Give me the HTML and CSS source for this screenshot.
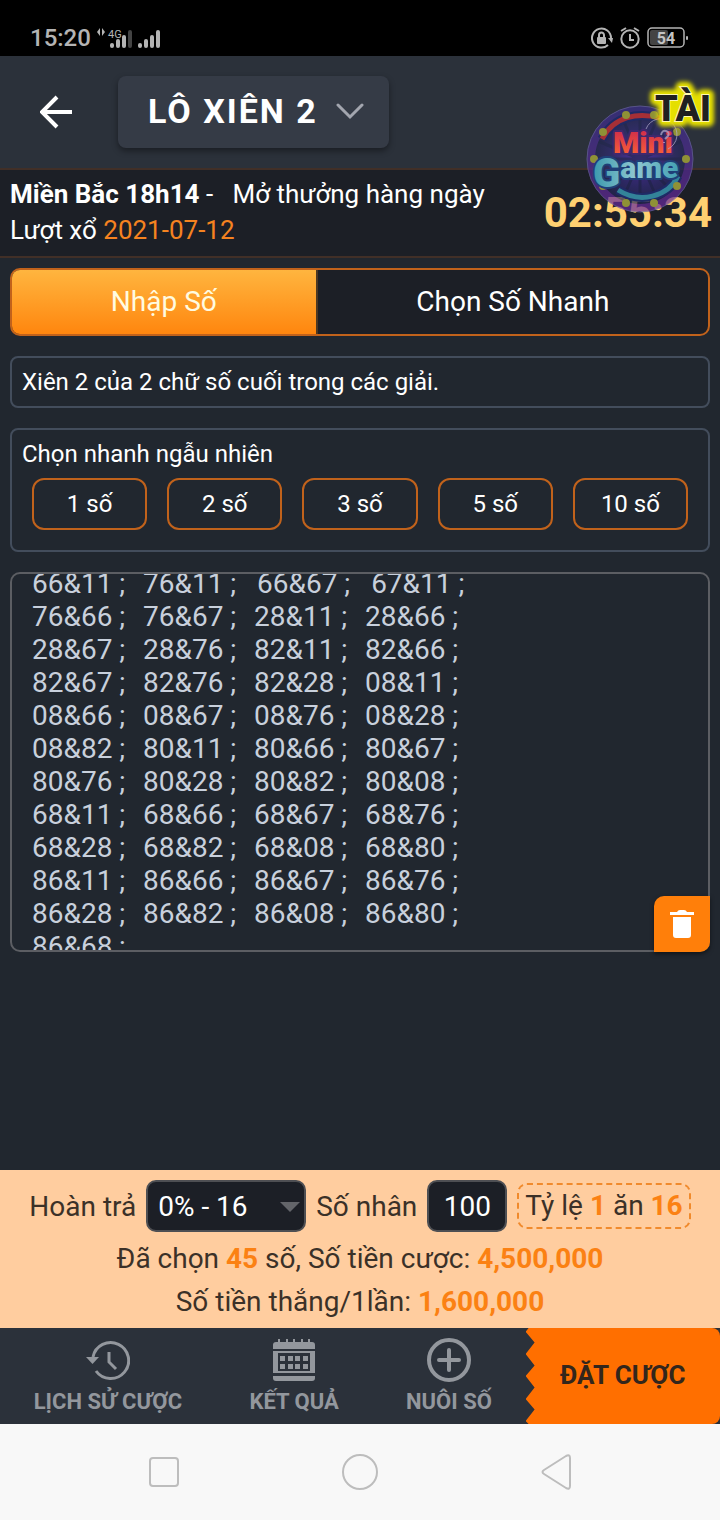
FILE: index.html
```html
<!DOCTYPE html>
<html lang="vi">
<head>
    <meta charset="UTF-8">
    <meta name="viewport" content="width=device-width, initial-scale=1.0">
    <title>Lô Xiên 2</title>
    <link rel="stylesheet" href="styles.css">
</head>
<body>
    <div class="status-bar">
        <div class="status-left">
            <span class="clock">15:20</span>
            <svg width="66" height="24" viewBox="0 0 66 24" fill="#b4b4b4">
                <path d="M0 6l3-4v8zM8 6L5 2v8z"/>
                <text x="11" y="12" font-size="11">4G</text>
                <rect x="13" y="17" width="4" height="5" rx="2"/>
                <rect x="19" y="13" width="4" height="9" rx="2"/>
                <rect x="25" y="9" width="4" height="13" rx="2"/>
                <rect x="31" y="4" width="4" height="18" rx="2" fill="#444"/>
                <rect x="41" y="17" width="4" height="5" rx="2"/>
                <rect x="47" y="13" width="4" height="9" rx="2"/>
                <rect x="53" y="9" width="4" height="13" rx="2"/>
                <rect x="59" y="4" width="4" height="18" rx="2"/>
            </svg>
        </div>
        <div class="status-right">
            <svg width="22" height="24" viewBox="0 0 22 24" fill="none" stroke="#b4b4b4" stroke-width="2">
                <path d="M17 19A9.500 9.500 0 1 1 20 12"/>
                <path d="M17 12h5l-1 5z" fill="#b4b4b4" stroke="none"/>
                <rect x="6" y="11" width="9" height="7" rx="1" fill="#b4b4b4" stroke="none"/>
                <path d="M8 11V9a2.500 2.500 0 0 1 5 0v2"/>
            </svg>
            <svg width="22" height="24" viewBox="0 0 22 24" fill="none" stroke="#b4b4b4" stroke-width="2">
                <circle cx="11" cy="13" r="8.700"/>
                <path d="M11 8v6h4M2 5l5-3M20 5l-5-3"/>
            </svg>
            <svg width="42" height="22" viewBox="0 0 42 22">
                <rect x="1" y="1" width="36" height="19" rx="4" fill="none" stroke="#b4b4b4" stroke-width="1.500"/>
                <rect x="3" y="3" width="18" height="15" rx="2" fill="#444"/>
                <rect x="39" y="9" width="2" height="4" rx="1" fill="#b4b4b4"/>
                <text x="19" y="17" font-size="16" font-weight="700" text-anchor="middle" fill="#c4c4c4">54</text>
            </svg>
        </div>
    </div>

    <header class="header">
        <a class="back" href="#" aria-label="Quay lại">
            <svg width="34" height="34" viewBox="0 0 34 34" fill="none" stroke="#fff" stroke-width="4">
                <path d="M32 17H3M17 2L2 17l15 15"/>
            </svg>
        </a>
        <button class="game-picker" type="button">
            LÔ XIÊN 2
            <svg width="28" height="18" viewBox="0 0 28 18" fill="none" stroke="#a3a6af" stroke-width="3" stroke-linecap="round">
                <path d="M2 3l12 12L26 3"/>
            </svg>
        </button>
    </header>

    <section class="draw-info">
        <div>
            <p><strong>Miền Bắc 18h14</strong>&nbsp;-&nbsp;&nbsp; Mở thưởng hàng ngày</p>
            <p>Lượt xổ <span class="draw-date">2021-07-12</span></p>
        </div>
        <div class="countdown">02:55:34</div>
    </section>

    <a class="mini-game" href="#" aria-label="Mini Game">
        <svg width="140" height="140" viewBox="0 0 140 140">
            <defs>
                <linearGradient id="ring" x1="0" y1="0" x2="0" y2="1">
                    <stop offset="0" stop-color="#3b2d8c"/>
                    <stop offset="1" stop-color="#682a9c"/>
                </linearGradient>
                <radialGradient id="disc">
                    <stop offset="0" stop-color="#5b31c9"/>
                    <stop offset="0.600" stop-color="#322b77"/>
                    <stop offset="1" stop-color="#222650"/>
                </radialGradient>
                <linearGradient id="fire" x1="0" y1="0" x2="0" y2="1">
                    <stop offset="0" stop-color="#c9234f"/>
                    <stop offset="1" stop-color="#ff6a32"/>
                </linearGradient>
                <linearGradient id="ice" x1="0" y1="0" x2="1" y2="0">
                    <stop offset="0" stop-color="#3b98ad"/>
                    <stop offset="0.500" stop-color="#8fc8d0"/>
                    <stop offset="1" stop-color="#43a0b4"/>
                </linearGradient>
                <filter id="glow" x="-30%" y="-50%" width="160%" height="200%">
                    <feGaussianBlur stdDeviation="2"/>
                </filter>
            </defs>
            <g opacity="0.700">
                <circle cx="60" cy="84" r="49" fill="url(#disc)"/>
                <g stroke="#1f2550" stroke-width="3" opacity="0.600">
                    <path d="M60 38v92M14 84h92M28 52l64 64M92 52l-64 64M42 42l36 84M78 42l-36 84M18 66l84 36M18 102l84-36"/>
                </g>
                <circle cx="60" cy="84" r="49" fill="none" stroke="url(#ring)" stroke-width="8"/>
                <circle cx="60" cy="84" r="53" fill="none" stroke="#6b62a8" stroke-width="1"/>
            </g>
            <g fill="none">
                <path d="M22 64C34 41 58 37 80 43" stroke="#1f2a66" stroke-width="9"/>
                <path d="M22 64C34 41 58 37 80 43" stroke="#a52f36" stroke-width="5"/>
                <path d="M38 115c22 14 50 7 60-14" stroke="#1f2a66" stroke-width="9"/>
                <path d="M38 115c22 14 50 7 60-14" stroke="#338399" stroke-width="5"/>
            </g>
            <g fill="#8f9136">
                <circle cx="46" cy="40" r="4"/><circle cx="74" cy="40" r="4"/>
                <circle cx="23" cy="57" r="4"/><circle cx="97" cy="57" r="4"/>
                <circle cx="14" cy="84" r="4"/><circle cx="106" cy="84" r="4"/>
                <circle cx="23" cy="111" r="4"/><circle cx="97" cy="111" r="4"/>
                <circle cx="46" cy="128" r="4"/><circle cx="74" cy="128" r="4"/>
            </g>
            <g class="logo-text" paint-order="stroke" stroke-width="4" stroke-linejoin="round">
                <text x="33" y="78" font-size="30" fill="url(#fire)" stroke="#41286d">Mini</text>
                <text x="13" y="112" font-size="40" fill="url(#ice)" stroke="#1f3f78">G<tspan y="103" font-size="30">ame</tspan></text>
            </g>
            <g fill="none" stroke="#b6aed0" opacity="0.700">
                <path d="M66 54a16 16 0 1 1 22 20"/>
                <path d="M81 60q1-5 5-4t2 5l-3 3M84 67v1" stroke-width="2"/>
            </g>
            <g class="logo-text" font-size="36" text-anchor="middle">
                <text x="103" y="46" fill="#e6e000" stroke="#e6e000" stroke-width="11" stroke-linejoin="round" filter="url(#glow)">TÀI</text>
                <text x="103" y="46" fill="#202020" stroke="#fff8b0" stroke-width="2" paint-order="stroke">TÀI</text>
            </g>
        </svg>
    </a>

    <main class="content">
        <div class="tabs">
            <button class="tab tab-active" type="button">Nhập Số</button>
            <button class="tab" type="button">Chọn Số Nhanh</button>
        </div>

        <p class="panel hint">Xiên 2 của 2 chữ số cuối trong các giải.</p>

        <div class="panel random">
            <p class="random-title">Chọn nhanh ngẫu nhiên</p>
            <div class="random-buttons">
                <button type="button">1 số</button>
                <button type="button">2 số</button>
                <button type="button">3 số</button>
                <button type="button">5 số</button>
                <button type="button">10 số</button>
            </div>
        </div>

        <div class="numbers">
            <textarea id="numbers" aria-label="Danh sách số">66&amp;11 ;&#9;76&amp;11 ;   66&amp;67 ;   67&amp;11 ;
76&amp;66 ;&#9;76&amp;67 ;&#9;28&amp;11 ;&#9;28&amp;66 ;
28&amp;67 ;&#9;28&amp;76 ;&#9;82&amp;11 ;&#9;82&amp;66 ;
82&amp;67 ;&#9;82&amp;76 ;&#9;82&amp;28 ;&#9;08&amp;11 ;
08&amp;66 ;&#9;08&amp;67 ;&#9;08&amp;76 ;&#9;08&amp;28 ;
08&amp;82 ;&#9;80&amp;11 ;&#9;80&amp;66 ;&#9;80&amp;67 ;
80&amp;76 ;&#9;80&amp;28 ;&#9;80&amp;82 ;&#9;80&amp;08 ;
68&amp;11 ;&#9;68&amp;66 ;&#9;68&amp;67 ;&#9;68&amp;76 ;
68&amp;28 ;&#9;68&amp;82 ;&#9;68&amp;08 ;&#9;68&amp;80 ;
86&amp;11 ;&#9;86&amp;66 ;&#9;86&amp;67 ;&#9;86&amp;76 ;
86&amp;28 ;&#9;86&amp;82 ;&#9;86&amp;08 ;&#9;86&amp;80 ;
86&amp;68 ;</textarea>
            <button class="clear" type="button" aria-label="Xóa">
                <svg width="24" height="28" viewBox="0 0 24 28" fill="#fff">
                    <path d="M0 2h7q1-2 3-2h4q2 0 3 2h7v3H0zM3 7h18v18a3 3 0 0 1-3 3H6a3 3 0 0 1-3-3z"/>
                </svg>
            </button>
        </div>
    </main>

    <section class="summary">
        <div class="bet-row">
            <label for="rebate">Hoàn trả</label>
            <span class="select-wrap">
                <select id="rebate">
                    <option>0% - 16</option>
                </select>
            </span>
            <label for="multiplier">Số nhân</label>
            <input id="multiplier" type="text" inputmode="numeric" value="100">
            <span class="odds">Tỷ lệ <b>1</b> ăn <b>16</b></span>
        </div>
        <p>Đã chọn <b>45</b> số, Số tiền cược: <b>4,500,000</b></p>
        <p>Số tiền thắng/1lần: <b>1,600,000</b></p>
    </section>

    <nav class="bottom-nav">
        <div class="nav-links">
            <a href="#">
                <svg width="44" height="44" viewBox="0 0 44 44" fill="none" stroke="#93979d" stroke-width="2">
                    <path d="M7 19A18 18 0 1 1 10 33" stroke-width="3"/>
                    <path d="M0 19h13l-6.500 7z" fill="#93979d" stroke="none"/>
                    <path d="M23 14v10l7 7" stroke-width="3"/>
                </svg>
                LỊCH SỬ CƯỢC
            </a>
            <a href="#">
                <svg width="44" height="44" viewBox="0 0 44 44" fill="#93979d">
                    <path d="M1 11V7a3 3 0 0 1 3-3h2V1h2v3h6V1h2v3h5V1h2v3h6V1h2v3h5V1h2v3h2a3 3 0 0 1 3 3v4z"/>
                    <path fill-rule="evenodd" d="M1 13h42v22H1zM6 15v18h32V15z"/>
                    <path d="M8 18h5v5H8zM16 18h5v5h-5zM23 18h5v5h-5zM31 18h5v5h-5zM8 26h5v5H8zM16 26h5v5h-5zM23 26h5v5h-5zM31 26h5v5h-5z"/>
                    <path d="M1 38h42v2a3 3 0 0 1-3 3H4a3 3 0 0 1-3-3z"/>
                </svg>
                KẾT QUẢ
            </a>
            <a href="#">
                <svg width="44" height="44" viewBox="0 0 44 44" fill="none" stroke="#93979d" stroke-width="4">
                    <circle cx="22" cy="22" r="20"/>
                    <path d="M22 12v20M12 22h20" stroke-linecap="round"/>
                </svg>
                NUÔI SỐ
            </a>
        </div>
        <button class="place-bet" type="button">ĐẶT CƯỢC</button>
    </nav>

    <div class="system-nav">
        <svg width="38" height="38" viewBox="0 0 38 38"><rect x="5" y="5" width="28" height="28" rx="3"/></svg>
        <svg width="38" height="38" viewBox="0 0 38 38"><circle cx="19" cy="19" r="17"/></svg>
        <svg width="38" height="38" viewBox="0 0 38 38"><path d="M7 17L29 3q4-2 4 2v28q0 4-4 2L7 21q-3-2 0-4z"/></svg>
    </div>

    <script>
        document.getElementById('numbers').scrollTop = 17;
    </script>
</body>
</html>
```

FILE: styles.css
```css
* {
    box-sizing: border-box;
}

body {
    margin: 0;
    min-height: 100vh;
    display: flex;
    flex-direction: column;
    position: relative;
    font-family: Roboto, "Noto Sans", sans-serif;
    font-size: 24px;
    color: #fff;
    background-color: #21272f;
}

p {
    margin: 0;
}

button, select, input, textarea {
    font: inherit;
    color: inherit;
    margin: 0;
}

a {
    color: inherit;
    text-decoration: none;
}

svg {
    display: block;
}

/* status bar */
.status-bar {
    display: flex;
    justify-content: space-between;
    align-items: flex-end;
    height: 56px;
    padding: 0 31px 4px 30px;
    background-color: #000;
}

.status-left, .status-right {
    display: flex;
    align-items: center;
    gap: 6px;
    height: 28px;
}

.clock {
    font-weight: 500;
    color: #b4b4b4;
}

/* header */
.header {
    display: flex;
    align-items: center;
    gap: 44px;
    padding: 20px 40px;
    background-color: #2b313a;
}

.game-picker {
    display: flex;
    align-items: center;
    gap: 18px;
    height: 72px;
    padding: 0 25px 2px 30px;
    border: 0;
    border-radius: 8px;
    background-color: #353b46;
    box-shadow: 0 3px 6px rgba(0, 0, 0, 0.4);
    font-size: 34px;
    font-weight: 700;
    letter-spacing: 2px;
}

.draw-info {
    display: flex;
    justify-content: space-between;
    padding: 6px 8px 8px 10px;
    border-top: 2px solid #412f27;
    border-bottom: 2px solid #412f27;
    background-color: #1c1f26;
    font-size: 26px;
    line-height: 36px;
}

.draw-date {
    color: #f58320;
}

.countdown {
    align-self: center;
    padding-top: 2px;
    font-size: 42px;
    font-weight: 700;
    color: #ffd071;
}

.mini-game {
    position: absolute;
    top: 75px;
    right: 0;
}

.logo-text {
    font-weight: 900;
}

/* content */
.content {
    flex: 1;
    display: flex;
    flex-direction: column;
    gap: 20px;
    padding: 10px;
}

.tabs {
    display: flex;
    height: 68px;
    border: 2px solid #c1621b;
    border-radius: 10px;
    background-color: #1c1f26;
    overflow: hidden;
}

.tab {
    flex: 9;
    padding: 0 0 2px;
    border: 0;
    background: none;
    font-size: 28px;
}

.tab-active {
    flex: 7;
    border-right: 2px solid #4d3822;
    background-image: linear-gradient(#ffb53f, #ff860e);
    color: #fffbe0;
}

.panel {
    border: 2px solid #434d5c;
    border-radius: 8px;
}

.hint {
    padding: 8px 10px;
    line-height: 32px;
}

.random {
    padding: 8px 0 20px;
}

.random-title {
    padding: 0 10px;
    line-height: 32px;
}

.random-buttons {
    display: grid;
    grid-template-columns: repeat(5, 1fr);
    gap: 20px;
    padding: 8px 20px 0;
}

.random-buttons button {
    height: 52px;
    padding: 0;
    border: 2px solid #c1621b;
    border-radius: 12px;
    background: none;
}

.numbers {
    position: relative;
    display: flex;
    height: 380px;
}

.numbers textarea {
    flex: 1;
    padding: 10px 20px;
    border: 2px solid #5c5e63;
    border-radius: 10px;
    background: none;
    color: #c8d0dc;
    font-size: 28px;
    line-height: 33px;
    tab-size: 111px;
    resize: none;
    outline: none;
    scrollbar-width: none;
}

.clear {
    position: absolute;
    right: 0;
    bottom: 0;
    display: grid;
    place-items: center;
    width: 56px;
    height: 56px;
    padding: 0;
    border: 0;
    border-radius: 10px 0 10px 0;
    background-color: #ff7f0a;
    box-shadow: 0 2px 4px rgba(0, 0, 0, 0.5);
}

/* bet summary */
.summary {
    padding: 10px 10px 5px;
    background-color: #ffcd9f;
    color: #3b3128;
    font-size: 28px;
    line-height: 43px;
    text-align: center;
}

.summary b {
    color: #fb8113;
}

.bet-row {
    display: flex;
    justify-content: center;
    align-items: center;
    gap: 10px;
    margin-bottom: 5px;
}

.select-wrap {
    position: relative;
}

.select-wrap::after {
    content: "";
    position: absolute;
    right: 6px;
    top: 22px;
    border: 10px solid transparent;
    border-top-color: #63656a;
    border-bottom: 0;
    pointer-events: none;
}

.bet-row select, .bet-row input {
    display: block;
    height: 52px;
    border: 2px solid #4e4f53;
    border-radius: 10px;
    background-color: #1c1f26;
    color: #fff;
}

.bet-row select {
    width: 160px;
    padding: 0 10px;
    appearance: none;
}

.bet-row input {
    width: 80px;
    padding: 0;
    text-align: center;
}

.odds {
    padding: 0 6px;
    border: 2px dashed #f08a2c;
    border-radius: 10px;
    line-height: 42px;
}

/* bottom navigation */
.bottom-nav {
    display: flex;
    height: 96px;
    background-color: #2b313a;
}

.nav-links {
    flex: 1;
    display: flex;
    justify-content: space-around;
    align-items: center;
    color: #93979d;
    font-size: 22px;
    font-weight: 700;
}

.nav-links a {
    display: flex;
    flex-direction: column;
    align-items: center;
    gap: 7px;
    padding-bottom: 1px;
}

.place-bet {
    width: 27%;
    padding: 0 0 2px;
    border: 0;
    border-radius: 0 8px 8px 0;
    background-color: #ff6f00;
    color: #33261c;
    font-size: 26px;
    font-weight: 700;
    clip-path: polygon(3px 0, 0 4%, 9px 15%, 0 27%, 9px 39%, 0 50%, 9px 62%, 0 74%, 9px 85%, 0 97%, 3px 100%, 100% 100%, 100% 0);
}

.system-nav {
    display: flex;
    justify-content: space-around;
    align-items: center;
    height: 96px;
    padding: 0 66px;
    background-color: #f8f8f8;
}

.system-nav svg {
    fill: none;
    stroke: #bdbdbd;
    stroke-width: 2;
}
```
